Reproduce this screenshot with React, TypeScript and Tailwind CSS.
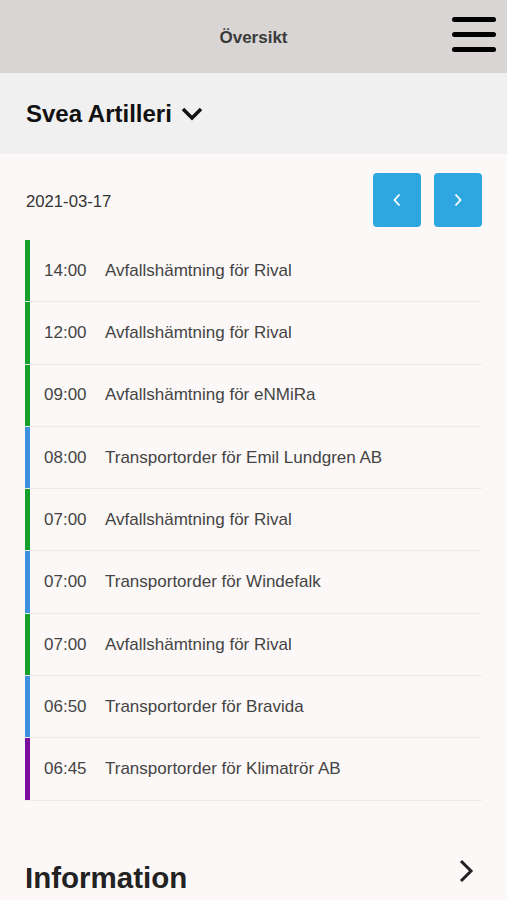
const rows = [
  { time: "14:00", title: "Avfallshämtning för Rival", kind: "waste" },
  { time: "12:00", title: "Avfallshämtning för Rival", kind: "waste" },
  { time: "09:00", title: "Avfallshämtning för eNMiRa", kind: "waste" },
  { time: "08:00", title: "Transportorder för Emil Lundgren AB", kind: "transport" },
  { time: "07:00", title: "Avfallshämtning för Rival", kind: "waste" },
  { time: "07:00", title: "Transportorder för Windefalk", kind: "transport" },
  { time: "07:00", title: "Avfallshämtning för Rival", kind: "waste" },
  { time: "06:50", title: "Transportorder för Bravida", kind: "transport" },
  { time: "06:45", title: "Transportorder för Klimatrör AB", kind: "special" },
];

const barClass: Record<string, string> = {
  waste: "bg-[#14a02a]",
  transport: "bg-[#3d8fe0]",
  special: "bg-[#7d0f9e]",
};

export default function App() {
  return (
    <div className="min-h-[900px] bg-[#fcf8f7] font-['Liberation_Sans',Arial,sans-serif] text-[#333]">
      <header className="relative flex h-[73px] items-center justify-center bg-[#d8d5d4]">
        <h1 className="mt-[3px] text-[17px] font-bold text-[#3a3a3a]">Översikt</h1>
        <button className="absolute right-[11px] top-[17px] flex w-[44px] flex-col gap-[10px]">
          <span className="h-[5px] w-full rounded-full bg-black" />
          <span className="h-[5px] w-full rounded-full bg-black" />
          <span className="h-[5px] w-full rounded-full bg-black" />
        </button>
      </header>

      <div className="flex h-[81px] items-center gap-[9px] bg-[#f0f0f0] px-[26px]">
        <h2 className="text-[24px] font-bold text-[#111]">Svea Artilleri</h2>
        <svg width="22" height="15" viewBox="0 0 22 15" className="mt-[-1px]">
          <path d="M2 3 L11 12 L20 3" fill="none" stroke="#111" strokeWidth="3.4" />
        </svg>
      </div>

      <section className="px-[25px] pt-[19px]">
        <div className="flex items-center justify-between">
          <span className="mt-[3px] pl-[1px] text-[16.7px] text-[#333]">2021-03-17</span>
          <div className="flex gap-[13px]">
            <NavButton dir="left" />
            <NavButton dir="right" />
          </div>
        </div>

        <ul className="mt-[13px]">
          {rows.map((row, i) => (
            <li key={i} className="flex h-[62.3px] border-b border-[#ececec]">
              <span className={`w-[5px] shrink-0 ${barClass[row.kind]}`} />
              <div className="flex items-center pl-[14px] text-[17px] text-[#444]">
                <span className="w-[61px]">{row.time}</span>
                <span>{row.title}</span>
              </div>
            </li>
          ))}
        </ul>

        <div className="mt-[60px] flex items-start justify-between">
          <h2 className="text-[29.5px] font-bold leading-[34px] text-[#222]">Information</h2>
          <svg width="16" height="24" viewBox="0 0 16 24" className="mr-[8px] mt-[-2px]">
            <path d="M3 2 L13 12 L3 22" fill="none" stroke="#222" strokeWidth="3" />
          </svg>
        </div>
      </section>
    </div>
  );
}

const NavButton = ({ dir }: { dir: "left" | "right" }) => (
  <button className="flex h-[54px] w-[48px] items-center justify-center rounded-[4px] bg-[#2ea6e0]">
    <svg width="10" height="14" viewBox="0 0 10 14">
      <path
        d={dir === "left" ? "M7.5 1.5 L2.5 7 L7.5 12.5" : "M2.5 1.5 L7.5 7 L2.5 12.5"}
        fill="none"
        stroke="#fff"
        strokeWidth="1.8"
      />
    </svg>
  </button>
);
